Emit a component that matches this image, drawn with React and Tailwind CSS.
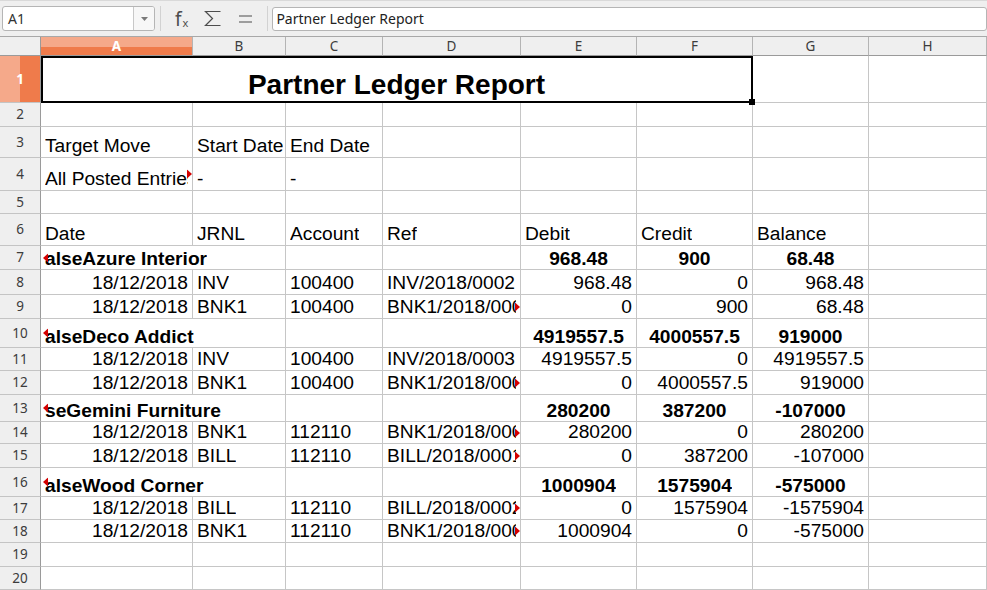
import React from "react";

function Tri({ dir }) {
  return (
    <svg
      width="5"
      height="9"
      viewBox="0 0 5 9"
      className={`absolute top-1/2 -translate-y-1/2 ${dir === "r" ? "right-0" : "left-[2px]"}`}
    >
      <polygon points={dir === "r" ? "0,0 5,4.5 0,9" : "5,0 0,4.5 5,9"} fill="#d40000" />
    </svg>
  );
}

function RH({ n, sel }) {
  return (
    <div
      className={`flex items-center justify-center border-r border-b border-r-[#9a9a9a] border-b-[#c4c4c4] text-[13.5px] font-['Noto_Sans',sans-serif] ${
        sel
          ? "bg-[linear-gradient(90deg,#f5a98a_50%,#ef7b4b_50%)] text-white font-bold"
          : "bg-[#efefef] text-[#3c3c3c]"
      }`}
    >
      {n}
    </div>
  );
}

function CH({ l, sel }) {
  return (
    <div
      className={`flex items-center justify-center border-r border-b border-r-[#b4b4b4] border-b-[#9a9a9a] text-[13.5px] font-['Noto_Sans',sans-serif] ${
        sel
          ? "bg-[linear-gradient(180deg,#f5a98a_55%,#ef7b4b_55%)] text-white font-bold"
          : "bg-[#efefef] text-[#3c3c3c]"
      }`}
    >
      {l}
    </div>
  );
}

function Cell({ children, al = "l", bold, span, tri }) {
  const j = al === "r" ? "justify-end" : al === "c" ? "justify-center" : "justify-start";
  const pr = al === "l" && tri !== "r" ? "pr-[1px]" : "pr-[4px]";
  return (
    <div
      className={`relative flex items-end min-w-0 border-r border-b border-[#c6c6c6] pl-[4px] ${pr} ${
        bold ? "pb-0" : "pb-[1px]"
      } ${j} ${span ? "col-span-2" : ""}`}
    >
      {children != null && (
        <span
          className={`block overflow-hidden whitespace-nowrap text-[19.2px] leading-[21px] text-black ${
            bold ? "font-bold" : ""
          }`}
        >
          {children}
        </span>
      )}
      {tri === "r" && <Tri dir="r" />}
      {tri === "l" && <Tri dir="l" />}
    </div>
  );
}

const rows = [
  { g: true, name: "alseAzure Interior", d: "968.48", c: "900", b: "68.48" },
  { date: "18/12/2018", j: "INV", acc: "100400", ref: "INV/2018/0002", d: "968.48", c: "0", b: "968.48" },
  { date: "18/12/2018", j: "BNK1", acc: "100400", ref: "BNK1/2018/0001", clip: true, d: "0", c: "900", b: "68.48" },
  { g: true, name: "alseDeco Addict", d: "4919557.5", c: "4000557.5", b: "919000" },
  { date: "18/12/2018", j: "INV", acc: "100400", ref: "INV/2018/0003", d: "4919557.5", c: "0", b: "4919557.5" },
  { date: "18/12/2018", j: "BNK1", acc: "100400", ref: "BNK1/2018/0002", clip: true, d: "0", c: "4000557.5", b: "919000" },
  { g: true, name: "seGemini Furniture", d: "280200", c: "387200", b: "-107000" },
  { date: "18/12/2018", j: "BNK1", acc: "112110", ref: "BNK1/2018/0003", clip: true, d: "280200", c: "0", b: "280200" },
  { date: "18/12/2018", j: "BILL", acc: "112110", ref: "BILL/2018/0001", clip: true, d: "0", c: "387200", b: "-107000" },
  { g: true, name: "alseWood Corner", d: "1000904", c: "1575904", b: "-575000" },
  { date: "18/12/2018", j: "BILL", acc: "112110", ref: "BILL/2018/0002", clip: true, d: "0", c: "1575904", b: "-1575904" },
  { date: "18/12/2018", j: "BNK1", acc: "112110", ref: "BNK1/2018/0004", clip: true, d: "1000904", c: "0", b: "-575000" },
];

function Empty({ n }) {
  return (
    <>
      {Array.from({ length: n }).map((_, i) => (
        <Cell key={i} />
      ))}
    </>
  );
}

export default function App() {
  return (
    <div className="w-[987px] h-[590px] overflow-hidden bg-white font-['Liberation_Sans',Arial,sans-serif]">
      {/* toolbar */}
      <div className="h-[37px] flex items-center bg-[#efefef] border-b border-[#a8a8a8] border-t border-t-[#d9d9d9] pl-[2px]">
        <div className="flex w-[153px] h-[25px] bg-white border border-[#b5b5b5] rounded-[3px] overflow-hidden">
          <div className="flex-1 flex items-center pl-[5px] text-[14px] text-[#333] font-['Noto_Sans',sans-serif]">A1</div>
          <div className="w-[21px] flex items-center justify-center border-l border-[#c8c8c8] bg-[#f7f7f7]">
            <svg width="7" height="4" viewBox="0 0 7 4">
              <polygon points="0,0 7,0 3.5,4" fill="#7a7a7a" />
            </svg>
          </div>
        </div>
        <div className="ml-[5px] w-px h-[25px] bg-[#d2d2d2]" />
        <div className="ml-[14px] flex items-end h-[18px] text-[#4d4d4d] font-['Noto_Sans',sans-serif]">
          <span className="text-[19px] leading-[18px]">f</span>
          <span className="text-[11px] leading-[10px] ml-[1px]">x</span>
        </div>
        <svg className="ml-[16px]" width="18" height="17" viewBox="0 0 18 17">
          <path d="M16.5 1.5 H1.5 L8.5 8.5 L1.5 15.5 H16.5" fill="none" stroke="#4d4d4d" strokeWidth="1.2" />
        </svg>
        <svg className="ml-[17px]" width="13" height="8" viewBox="0 0 13 8">
          <path d="M0 1 H13 M0 7 H13" stroke="#4d4d4d" strokeWidth="1.2" />
        </svg>
        <div className="ml-[15px] w-px h-[25px] bg-[#d2d2d2]" />
        <div className="ml-[4px] flex-1 h-[24px] bg-white border border-[#b5b5b5] rounded-[3px] flex items-center pl-[3px] text-[14px] text-[#222] font-['Noto_Sans',sans-serif]">
          Partner Ledger Report
        </div>
      </div>

      {/* sheet */}
      <div className="grid grid-cols-[41px_152px_93px_97px_138px_116px_116px_116px_118px] grid-rows-[19px_47px_24px_31px_33px_23px_32px_24px_25px_24px_29px_23px_24px_27px_22px_24px_29px_23px_23px_24px_23px]">
        {/* column headers */}
        <div className="bg-[#efefef] border-r border-b border-r-[#9a9a9a] border-b-[#9a9a9a]" />
        <CH l="A" sel />
        <CH l="B" />
        <CH l="C" />
        <CH l="D" />
        <CH l="E" />
        <CH l="F" />
        <CH l="G" />
        <CH l="H" />

        {/* row 1 */}
        <RH n="1" sel />
        <div className="col-span-6 relative flex items-end justify-center pb-[1px] border-r border-b border-[#c6c6c6]">
          <span className="text-[28px] leading-[32px] font-bold text-black whitespace-nowrap">Partner Ledger Report</span>
          <div className="absolute left-0 top-0 right-[-1px] bottom-[-1px] border-2 border-black z-10" />
          <div className="absolute right-[-3px] bottom-[-3px] w-[6px] h-[6px] bg-black z-10" />
        </div>
        <Cell />
        <Cell />

        {/* row 2 */}
        <RH n="2" />
        <Empty n={8} />

        {/* row 3 */}
        <RH n="3" />
        <Cell>Target Move</Cell>
        <Cell>Start Date</Cell>
        <Cell>End Date</Cell>
        <Empty n={5} />

        {/* row 4 */}
        <RH n="4" />
        <Cell tri="r">All Posted Entries</Cell>
        <Cell>-</Cell>
        <Cell>-</Cell>
        <Empty n={5} />

        {/* row 5 */}
        <RH n="5" />
        <Empty n={8} />

        {/* row 6 */}
        <RH n="6" />
        <Cell>Date</Cell>
        <Cell>JRNL</Cell>
        <Cell>Account</Cell>
        <Cell>Ref</Cell>
        <Cell>Debit</Cell>
        <Cell>Credit</Cell>
        <Cell>Balance</Cell>
        <Cell />

        {rows.map((r, i) => {
          const n = i + 7;
          if (r.g) {
            return (
              <React.Fragment key={n}>
                <RH n={String(n)} />
                <Cell span bold tri="l">
                  {r.name}
                </Cell>
                <Cell />
                <Cell />
                <Cell al="c" bold>
                  {r.d}
                </Cell>
                <Cell al="c" bold>
                  {r.c}
                </Cell>
                <Cell al="c" bold>
                  {r.b}
                </Cell>
                <Cell />
              </React.Fragment>
            );
          }
          return (
            <React.Fragment key={n}>
              <RH n={String(n)} />
              <Cell al="r">{r.date}</Cell>
              <Cell>{r.j}</Cell>
              <Cell>{r.acc}</Cell>
              <Cell tri={r.clip ? "r" : undefined}>{r.ref}</Cell>
              <Cell al="r">{r.d}</Cell>
              <Cell al="r">{r.c}</Cell>
              <Cell al="r">{r.b}</Cell>
              <Cell />
            </React.Fragment>
          );
        })}

        {/* rows 19, 20 */}
        <RH n="19" />
        <Empty n={8} />
        <RH n="20" />
        <Empty n={8} />
      </div>
    </div>
  );
}
